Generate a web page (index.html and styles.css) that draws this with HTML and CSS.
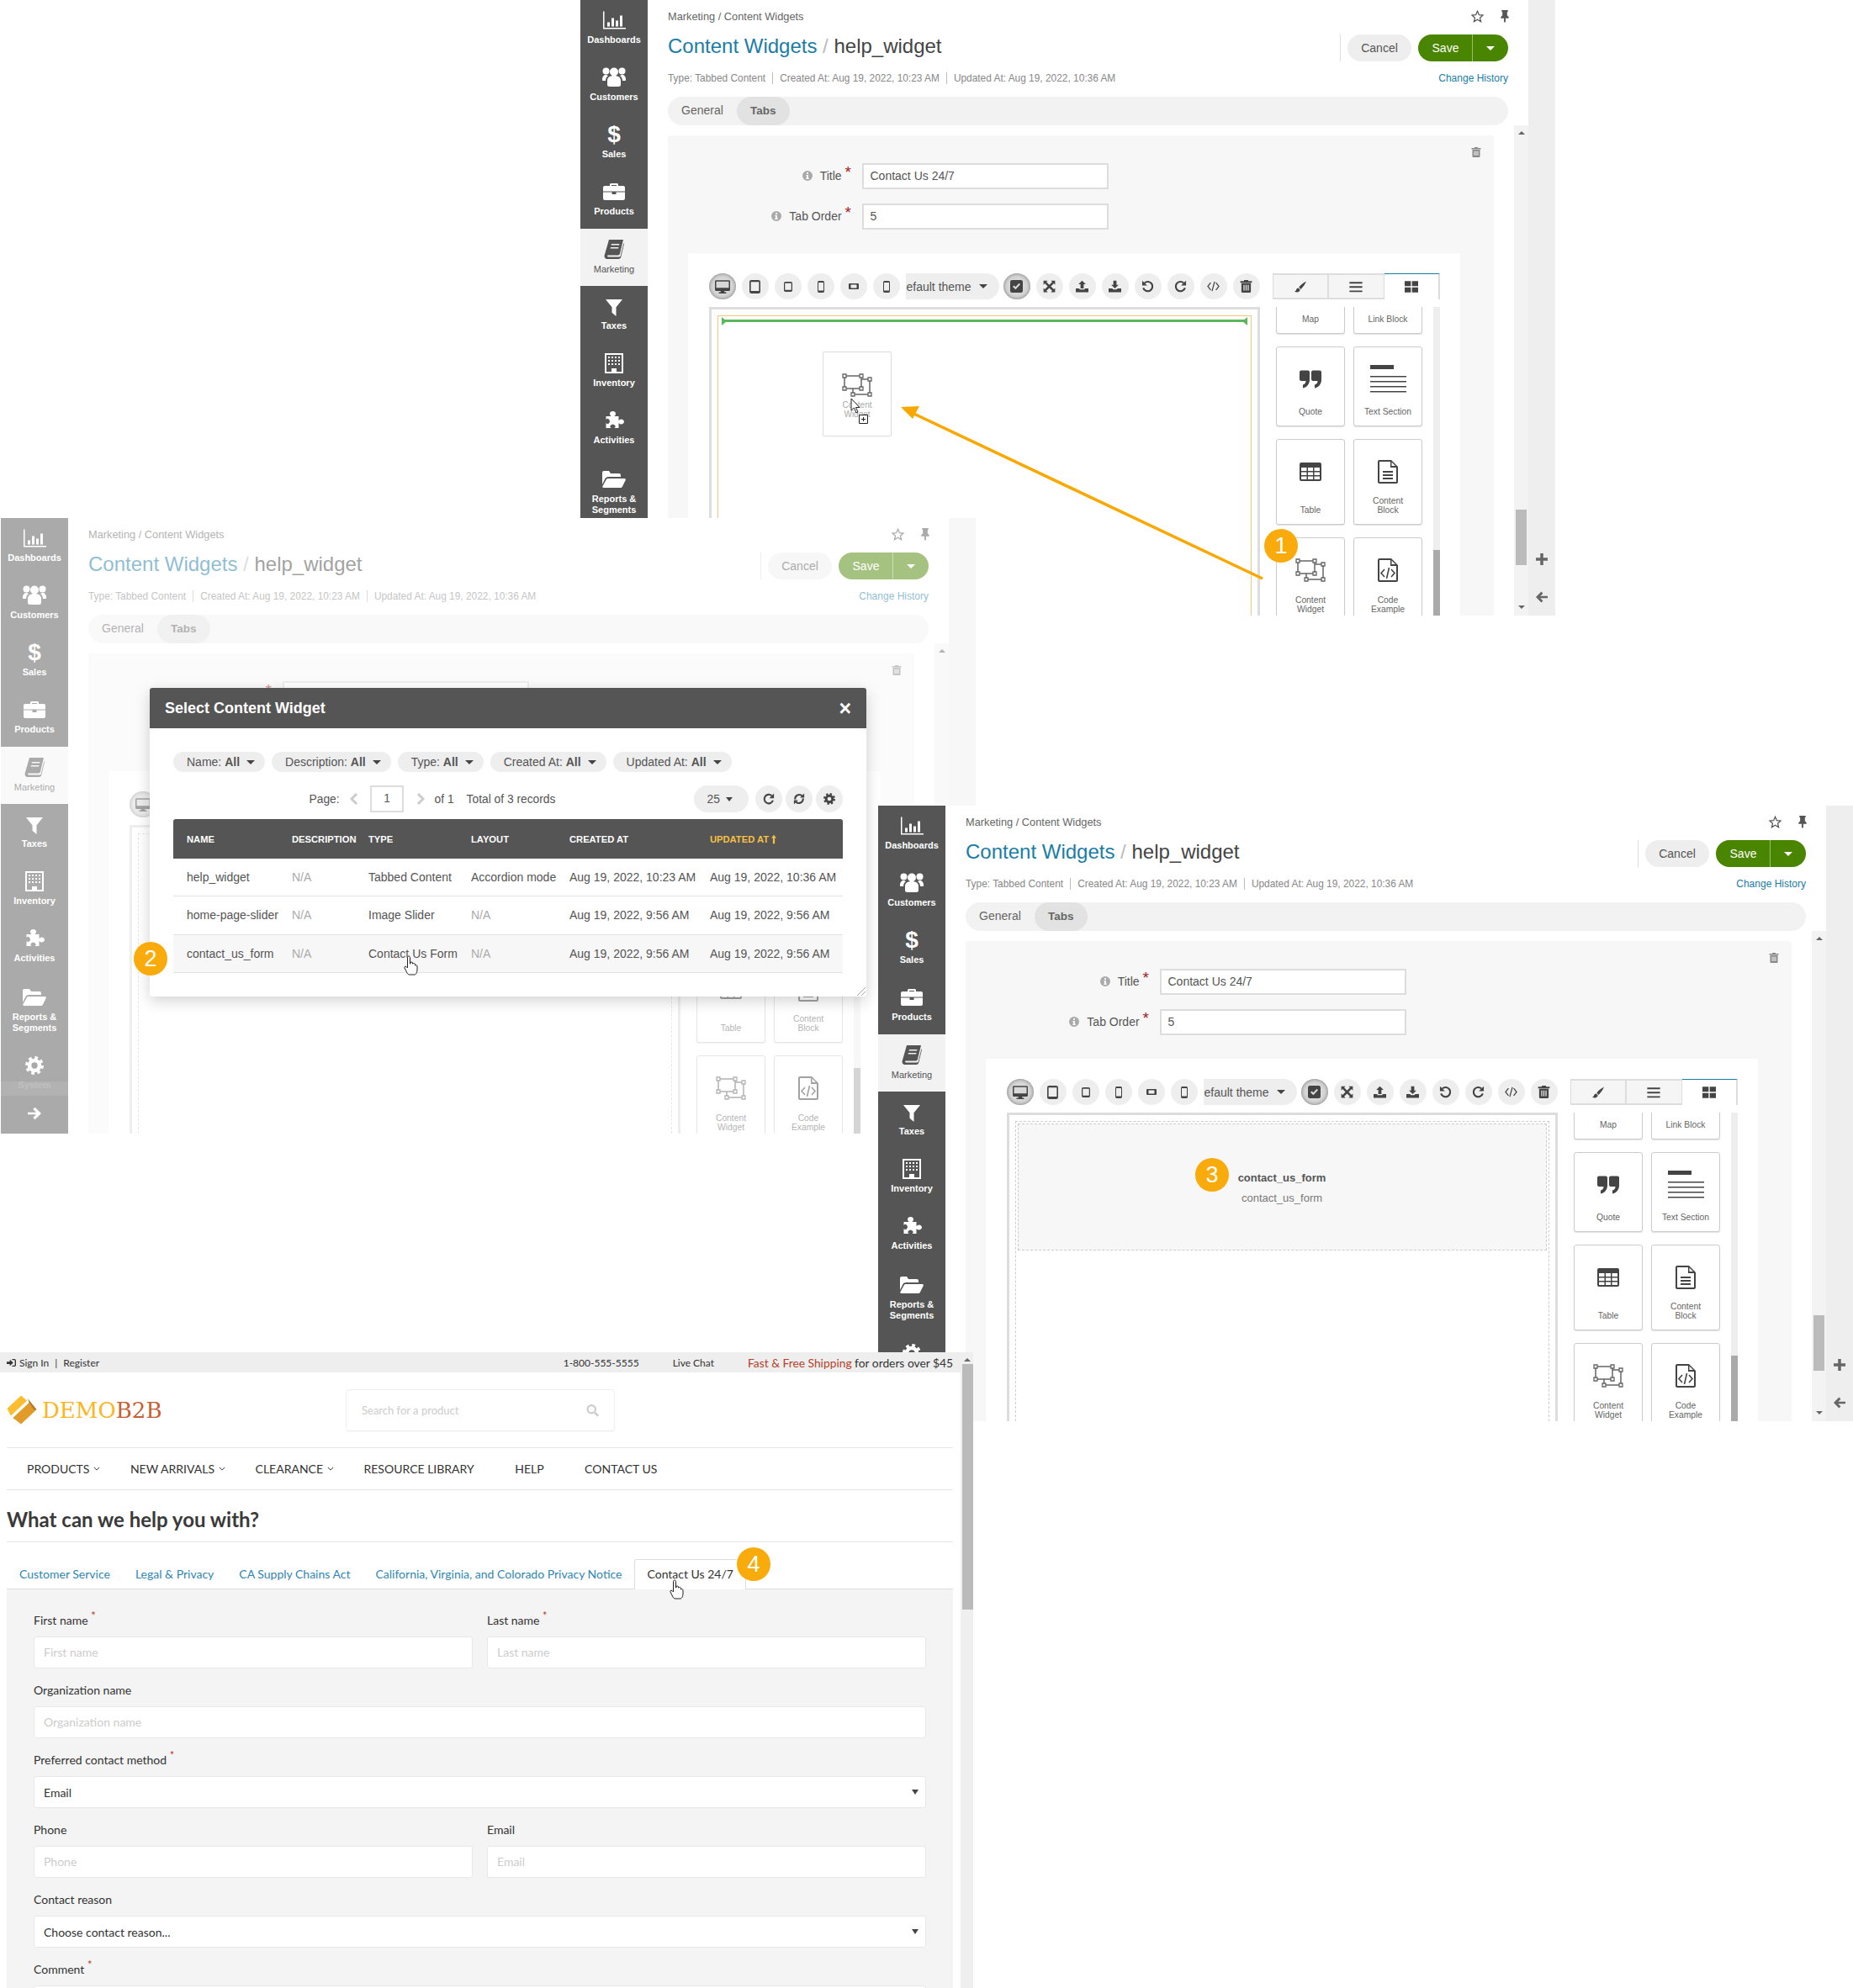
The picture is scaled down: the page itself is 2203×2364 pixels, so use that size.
FILE: index.html
```html
<!DOCTYPE html>
<html lang="en">
<head>
<meta charset="utf-8">
<title>Content widgets walkthrough</title>
<link rel="stylesheet" href="styles.css">
</head>
<body>
<svg class="defs" aria-hidden="true">
<symbol id="i-dash" viewBox="0 0 27 21"><path d="M0 0h1.5v19.5H27V21H0z"/><path d="M5 13h3v5H5zM10 8h3v10h-3zM15 11h3v7h-3zM20 5h3v13h-3z"/></symbol>
<symbol id="i-users" viewBox="0 0 28 24"><circle cx="4.5" cy="4.5" r="4"/><circle cx="23.5" cy="4.5" r="4"/><circle cx="14" cy="5.5" r="5"/><path d="M6 16c0-4 3-6 8-6s8 2 8 6v5c0 1-1 2-3 2H9c-2 0-3-1-3-2zM0 14c0-3 2-5 4-5 1 0 2 .5 3 1-1.5 1-3 3-3 6H1c-.6 0-1-.4-1-1zM28 14c0-3-2-5-4-5-1 0-2 .5-3 1 1.500 1 3 3 3 6h3c.6 0 1-.4 1-1z"/></symbol>
<symbol id="i-brief" viewBox="0 0 26 20"><path fill-rule="evenodd" d="M8 3V1.500C8 .7 8.700 0 9.500 0h7c.8 0 1.500.7 1.500 1.500V3h6c1.100 0 2 .9 2 2v4.500H0V5c0-1.100.9-2 2-2zM10 2v1h6V2z"/><path d="M0 10.500h10.500V13h5v-2.500H26V18c0 1.100-.9 2-2 2H2c-1.100 0-2-.9-2-2z"/></symbol>
<symbol id="i-book" viewBox="0 0 24 24"><path fill-rule="evenodd" d="M6 1h17l-4 16.500c-.3 1.200-1 2-2 2H5c-1 0-1.200 1-.8 1.500.3.3.8.5 1.500.5H18c.8 0 1.400-.3 1.700-1L23.500 5l.5 1-3.700 15.500C20 23 18.800 24 17.300 24H4c-2.200 0-4-2-3.300-4.500zM9 6l-.4 1.500h9.500L18.500 6zM8 10l-.4 1.500h9.500l.4-1.500z"/></symbol>
<symbol id="i-filter" viewBox="0 0 24 24"><path d="M0 0h24L15 11v13l-6-5v-8z"/></symbol>
<symbol id="i-building" viewBox="0 0 22 24"><path fill-rule="evenodd" d="M0 0h22v24H0zM2 2v20h6v-4h6v4h6V2z"/><path d="M4 4h2v2H4zm4 0h2v2H8zm4 0h2v2h-2zm4 0h2v2h-2zM4 8h2v2H4zm4 0h2v2H8zm4 0h2v2h-2zm4 0h2v2h-2zM4 12h2v2H4zm4 0h2v2H8zm4 0h2v2h-2zm4 0h2v2h-2z"/></symbol>
<symbol id="i-puzzle" viewBox="0 0 24 24"><path d="M2 7h6C7 6 6.500 5 6.500 4 6.500 2 8 1 10 1s3.500 1 3.500 3c0 1-.5 2-1.500 3h5v5c1-1 2-1.500 3-1.500 2 0 3.500 1.500 3.500 3s-1.500 3-3.500 3c-1 0-2-.5-3-1.500v6h-5c1-1 1.500-1.500 1-2.500s-2-2-3-2-2.500 1-3 2 0 1.500 1 2.500H2v-6c1 1 1.500 1.500 2.500 1s2-2 2-3-1-2.500-2-3-1.500 0-2.500 1z"/></symbol>
<symbol id="i-folder" viewBox="0 0 28 22"><path d="M0 3c0-1.100.9-2 2-2h6l2 3h10c1.100 0 2 .9 2 2v2H7C5.500 8 4 9 3.400 10.200L0 17z"/><path d="M7 10h19.500c1 0 1.700 1 1.200 2l-4 8c-.4.7-1 1-1.700 1H1.500c-1 0-1.600-1-1.100-1.800l4.400-8C5.200 10.400 6 10 7 10z"/></symbol>
<symbol id="i-gear" viewBox="0 0 24 24"><circle cx="12" cy="12" r="6.500" fill="none" stroke="currentColor" stroke-width="5"/><circle cx="12" cy="12" r="10" fill="none" stroke="currentColor" stroke-width="4" stroke-dasharray="4 3.850"/></symbol>
<symbol id="i-desktop" viewBox="0 0 24 21"><path fill-rule="evenodd" d="M2 0h20c1.100 0 2 .9 2 2v13c0 1.100-.9 2-2 2h-7v2h3v2H6v-2h3v-2H2c-1.100 0-2-.9-2-2V2C0 .9.900 0 2 0zm0 2v10h20V2z"/></symbol>
<symbol id="i-tablet" viewBox="0 0 16 22" preserveAspectRatio="none"><path fill-rule="evenodd" d="M3 0h10a3 3 0 013 3v16a3 3 0 01-3 3H3a3 3 0 01-3-3V3a3 3 0 013-3zM2 3v15h12V3z"/></symbol>
<symbol id="i-land" viewBox="0 0 24 14"><path fill-rule="evenodd" d="M2 0h20a2 2 0 012 2v10a2 2 0 01-2 2H2a2 2 0 01-2-2V2a2 2 0 012-2zm3 3v8h14V3z"/></symbol>
<symbol id="i-check" viewBox="0 0 20 20"><path fill-rule="evenodd" d="M3 0h14a3 3 0 013 3v14a3 3 0 01-3 3H3a3 3 0 01-3-3V3a3 3 0 013-3zM8.500 15L16 7l-2-2-5.500 6L6 8.500l-2 2z"/></symbol>
<symbol id="i-expand" viewBox="0 0 24 24"><path d="M1 1h8L6.500 3.500 12 9l5.500-5.500L15 1h8v8l-2.500-2.500L15 12l5.500 5.500L23 15v8h-8l2.500-2.500L12 15l-5.500 5.500L9 23H1v-8l2.500 2.500L9 12 3.500 6.500 1 9z"/></symbol>
<symbol id="i-upload" viewBox="0 0 24 22"><path d="M12 0l7 7h-4v8H9V7H5zM0 15h7v2h10v-2h7v7H0z"/></symbol>
<symbol id="i-download" viewBox="0 0 24 22"><path d="M9 0h6v8h4l-7 7-7-7h4zM0 15h7l2 2h6l2-2h7v7H0z"/></symbol>
<symbol id="i-undo" viewBox="0 0 24 24"><path d="M6 5.500A9 9 0 1 1 3.500 15" fill="none" stroke="currentColor" stroke-width="3.500"/><path d="M1.500 1v9.500H11z"/></symbol>
<symbol id="i-redo" viewBox="0 0 24 24"><path d="M18 5.500A9 9 0 1 0 20.500 15" fill="none" stroke="currentColor" stroke-width="3.500"/><path d="M22.500 1v9.500H13z"/></symbol>
<symbol id="i-sync" viewBox="0 0 24 24"><path d="M4 13a8.500 8.500 0 0 1 14.500-7M20 11a8.500 8.500 0 0 1-14.500 7" fill="none" stroke="currentColor" stroke-width="3.500"/><path d="M22.500 1v8.500H14zM1.500 23v-8.500H10z"/></symbol>
<symbol id="i-code" viewBox="0 0 24 24"><path d="M7 5L1.500 12 7 19M17 5l5.500 7L17 19M14.500 3l-5 18" fill="none" stroke="currentColor" stroke-width="2"/></symbol>
<symbol id="i-trash" viewBox="0 0 22 24"><path fill-rule="evenodd" d="M7 2V0h8v2h7v3H0V2zM2 6h18v16c0 1-1 2-2 2H4c-1 0-2-1-2-2zm4 3v11h2V9zm4 0v11h2V9zm4 0v11h2V9z"/></symbol>
<symbol id="i-brush" viewBox="0 0 24 24"><path d="M24 1C20 3 13 8 9 13l4 4C18 12 22 6 24 1zM8 14.500c-3 0-4 2-4.500 4-.3 1.500-1.500 2.500-3.500 3 3 2 7 2 9.500 0 1.500-1.200 2-3 1.500-4.500z"/></symbol>
<symbol id="i-bars" viewBox="0 0 24 22"><path d="M0 2h24v3H0zM0 10h24v3H0zM0 18h24v3H0z"/></symbol>
<symbol id="i-grid" viewBox="0 0 24 20"><path d="M0 0h11v9H0zM13 0h11v9H13zM0 11h11v9H0zM13 11h11v9H13z"/></symbol>
<symbol id="i-quote" viewBox="0 0 26 22"><path d="M2 0h8a2 2 0 012 2v9c0 5-3 9-8 10v-4c2-.5 3.500-2 3.500-4.500H2a2 2 0 01-2-2V2a2 2 0 012-2zM16 0h8a2 2 0 012 2v9c0 5-3 9-8 10v-4c2-.5 3.500-2 3.500-4.500H16a2 2 0 01-2-2V2a2 2 0 012-2z"/></symbol>
<symbol id="i-text" viewBox="0 0 43 33"><path d="M0 0h28v5H0zM0 13h43v1.500H0zM0 19h43v1.500H0zM0 25h43v1.500H0zM0 31h43v1.500H0z"/></symbol>
<symbol id="i-table" viewBox="0 0 26 22"><path fill-rule="evenodd" d="M2 0h22a2 2 0 012 2v18a2 2 0 01-2 2H2a2 2 0 01-2-2V2a2 2 0 012-2zM2 6v4h6.500V6zm8 0v4h6V6zm7.500 0v4H24V6zM2 11.500V15h6.500v-3.500zm8 0V15h6v-3.500zm7.500 0V15H24v-3.500zM2 16.500V20h6.500v-3.500zm8 0V20h6v-3.500zm7.500 0V20H24v-3.500z"/></symbol>
<symbol id="i-file" viewBox="0 0 24 28"><path fill-rule="evenodd" d="M2 0h14l8 8v18a2 2 0 01-2 2H2a2 2 0 01-2-2V2a2 2 0 012-2zM2 2v24h20V9h-7V2zM16.500 2.500V7H21z"/><path d="M6 13h12v2H6zM6 17h12v2H6zM6 21h12v2H6z"/></symbol>
<symbol id="i-codefile" viewBox="0 0 24 28"><path fill-rule="evenodd" d="M2 0h14l8 8v18a2 2 0 01-2 2H2a2 2 0 01-2-2V2a2 2 0 012-2zM2 2v24h20V9h-7V2zM16.500 2.500V7H21z"/><path d="M8 13l-4 4.500L8 22M16 13l4 4.500-4 4.500M13.500 11l-3 13" fill="none" stroke="currentColor" stroke-width="1.600"/></symbol>
<symbol id="i-widget" viewBox="0 0 36 28"><path d="M3 3h20v15H3zM23 7h10v18H13v-7" fill="none" stroke="currentColor" stroke-width="1.500"/><path d="M1 1h4v4H1zM21 1h4v4h-4zM1 16h4v4H1zM21 16h4v4h-4zM31 5h4v4h-4zM31 23h4v4h-4zM11 23h4v4h-4z" fill="#fff" stroke="currentColor" stroke-width="1.300"/></symbol>
<symbol id="i-star" viewBox="0 0 24 24"><path d="M12 2l3 7 7.500.7-5.700 5 1.700 7.300-6.500-3.900L5.500 22l1.700-7.300-5.700-5L9 9z" fill="none" stroke="currentColor" stroke-width="2"/></symbol>
<symbol id="i-pin" viewBox="0 0 18 24"><path d="M3 0h12v2.500L13.500 4v6l3 3v2.500H10.500V22L9 24l-1.500-2v-6.500h-6V13l3-3V4L3 2.500z"/></symbol>
<symbol id="i-info" viewBox="0 0 24 24"><path fill-rule="evenodd" d="M12 0a12 12 0 110 24 12 12 0 010-24zM10 4v4h4V4zM8.500 10v2.500H10V17H8.500v3h7v-3H14v-7z"/></symbol>
<symbol id="i-plus" viewBox="0 0 24 24"><path d="M9 0h6v9h9v6h-9v9H9v-9H0V9h9z"/></symbol>
<symbol id="i-left" viewBox="0 0 24 24"><path d="M0 12L11 1l3.500 3.500L9 10h15v4H9l5.500 5.500L11 23z"/></symbol>
<symbol id="i-right" viewBox="0 0 24 24"><path d="M24 12L13 1 9.500 4.500 15 10H0v4h15l-5.500 5.500L13 23z"/></symbol>
<symbol id="i-search" viewBox="0 0 24 24"><circle cx="10" cy="10" r="7.500" fill="none" stroke="currentColor" stroke-width="3.500"/><path d="M15 18l3-3 6 6-3 3z"/></symbol>
<symbol id="i-signin" viewBox="0 0 24 24"><path d="M0 9h8V4l9 8-9 8v-5H0zM14 2h6c2 0 4 2 4 4v12c0 2-2 4-4 4h-6v-3h6c.6 0 1-.4 1-1V6c0-.6-.4-1-1-1h-6z"/></symbol>
<symbol id="i-hand" viewBox="0 0 18 24"><path d="M6 1c1 0 1.500.7 1.500 1.500V10h.5V8.500c1-1 2.500-.5 2.500.5v1h.5c1-1 2.500-.5 2.500.7V12c1-.8 2.500-.3 2.500 1v4c0 3-1.500 6-3 6H7c-1.500 0-2.500-1-3-2L1 15c-.5-1 .5-2.500 2-1.500L4.500 15V2.500C4.500 1.700 5 1 6 1z" fill="#fff" stroke="#222"/></symbol>
<symbol id="i-arrowcur" viewBox="0 0 12 19"><path d="M1 1v14l3.500-3 2.500 6 2-1-2.500-5.500H11z" fill="#fff" stroke="#222"/></symbol>
<symbol id="i-dragadd" viewBox="0 0 11 11"><path d="M.5.500h10v10H.5z" fill="#fff" stroke="#222"/><path d="M5 3h1v2h2v1H6v2H5V6H3V5h2z" fill="#222"/></symbol>
<symbol id="i-sortup" viewBox="0 0 8 14"><path d="M4 0l4 5H5.500v9h-3V5H0z"/></symbol>
</svg>

<main class="canvas">

<!-- Step 1 -->
<section class="screen screen-a">
  <nav class="rail">
    <a class="rail-item"><svg class="ri ri-dash"><use href="#i-dash"/></svg><span>Dashboards</span></a>
    <a class="rail-item"><svg class="ri ri-users"><use href="#i-users"/></svg><span>Customers</span></a>
    <a class="rail-item"><b class="ri-dollar">$</b><span>Sales</span></a>
    <a class="rail-item"><svg class="ri ri-brief"><use href="#i-brief"/></svg><span>Products</span></a>
    <a class="rail-item is-active"><svg class="ri ri-book"><use href="#i-book"/></svg><span>Marketing</span></a>
    <a class="rail-item"><svg class="ri ri-filter"><use href="#i-filter"/></svg><span>Taxes</span></a>
    <a class="rail-item"><svg class="ri ri-build"><use href="#i-building"/></svg><span>Inventory</span></a>
    <a class="rail-item"><svg class="ri ri-puzzle"><use href="#i-puzzle"/></svg><span>Activities</span></a>
    <a class="rail-item rail-tall"><svg class="ri ri-folder"><use href="#i-folder"/></svg><span>Reports &amp;<br>Segments</span></a>
  </nav>
  <div class="main">
    <div class="crumb-row"><span class="crumb">Marketing / Content Widgets</span><span class="crumb-tools"><svg class="t-star"><use href="#i-star"/></svg><svg class="t-pin"><use href="#i-pin"/></svg></span></div>
    <div class="title-row">
      <h1 class="title"><a>Content Widgets</a> <i>/</i> help_widget</h1>
      <div class="actions"><span class="btn-cancel">Cancel</span><span class="btn-save"><b>Save</b><em><u class="caret caret-w"></u></em></span></div>
    </div>
    <div class="meta-row"><span class="meta"><span>Type: Tabbed Content</span><span>Created At: Aug 19, 2022, 10:23 AM</span><span>Updated At: Aug 19, 2022, 10:36 AM</span></span><a class="history">Change History</a></div>
    <div class="tabs-bar"><span class="tab">General</span><span class="tab is-on">Tabs</span></div>
    <div class="panel">
      <svg class="panel-trash"><use href="#i-trash"/></svg>
      <div class="field"><label class="field-label"><svg class="info"><use href="#i-info"/></svg>Title<sup>*</sup></label><div class="field-input">Contact Us 24/7</div></div>
      <div class="field"><label class="field-label"><svg class="info"><use href="#i-info"/></svg>Tab Order<sup>*</sup></label><div class="field-input">5</div></div>
      <div class="editor">
        <div class="edit-col">
          <div class="toolbar">
            <span class="tb is-on"><svg class="tb-desk"><use href="#i-desktop"/></svg></span>
            <span class="tb"><svg class="tb-t1"><use href="#i-tablet"/></svg></span>
            <span class="tb"><svg class="tb-t2"><use href="#i-tablet"/></svg></span>
            <span class="tb"><svg class="tb-m1"><use href="#i-tablet"/></svg></span>
            <span class="tb"><svg class="tb-l"><use href="#i-land"/></svg></span>
            <span class="tb"><svg class="tb-m1"><use href="#i-tablet"/></svg></span>
            <span class="theme"><span class="theme-text">efault theme</span><u class="caret"></u></span>
            <span class="tb is-on"><svg class="tb-std"><use href="#i-check"/></svg></span>
            <span class="tb"><svg class="tb-std"><use href="#i-expand"/></svg></span>
            <span class="tb"><svg class="tb-std"><use href="#i-upload"/></svg></span>
            <span class="tb"><svg class="tb-std"><use href="#i-download"/></svg></span>
            <span class="tb"><svg class="tb-std"><use href="#i-undo"/></svg></span>
            <span class="tb"><svg class="tb-std"><use href="#i-redo"/></svg></span>
            <span class="tb"><svg class="tb-std"><use href="#i-code"/></svg></span>
            <span class="tb"><svg class="tb-std"><use href="#i-trash"/></svg></span>
          </div>
          <div class="frame"><div class="drop drop-live"><div class="guide"></div></div></div>
        </div>
        <div class="lib">
          <div class="lib-tabs"><span class="lib-tab"><svg><use href="#i-brush"/></svg></span><span class="lib-tab"><svg><use href="#i-bars"/></svg></span><span class="lib-tab is-on"><svg><use href="#i-grid"/></svg></span></div>
          <div class="lib-body">
            <div class="cards">
              <div class="card"><span class="card-label">Map</span></div>
              <div class="card"><span class="card-label">Link Block</span></div>
              <div class="card"><span class="card-ico"><svg class="c-quote"><use href="#i-quote"/></svg></span><span class="card-label">Quote</span></div>
              <div class="card"><span class="card-ico"><svg class="c-text"><use href="#i-text"/></svg></span><span class="card-label">Text Section</span></div>
              <div class="card"><span class="card-ico"><svg class="c-table"><use href="#i-table"/></svg></span><span class="card-label">Table</span></div>
              <div class="card"><span class="card-ico"><svg class="c-file"><use href="#i-file"/></svg></span><span class="card-label">Content<br>Block</span></div>
              <div class="card"><span class="card-ico"><svg class="c-widget"><use href="#i-widget"/></svg></span><span class="card-label">Content<br>Widget</span></div>
              <div class="card"><span class="card-ico"><svg class="c-file"><use href="#i-codefile"/></svg></span><span class="card-label">Code<br>Example</span></div>
            </div>
            <div class="lib-scroll"><div class="lib-thumb"></div></div>
          </div>
        </div>
      </div>
    </div>
  </div>
  <div class="track"><u class="arr-up"></u><div class="track-thumb"></div><u class="arr-down"></u></div>
  <div class="side"><svg class="side-ico"><use href="#i-plus"/></svg><svg class="side-ico"><use href="#i-left"/></svg></div>
  <div class="ghost"><svg class="c-widget"><use href="#i-widget"/></svg><span>Content<br>Widget</span></div>
  <svg class="cur-arrow"><use href="#i-arrowcur"/></svg>
  <svg class="cur-plus"><use href="#i-dragadd"/></svg>
  <svg class="callout" viewBox="0 0 1159 732"><path d="M811 688L386 487" fill="none" stroke="#f9a800" stroke-width="3.500"/><path d="M381 484l22-1-8 15z" fill="#f9a800"/></svg>
  <span class="badge badge-1">1</span>
</section>

<!-- Step 2 -->
<section class="screen screen-b">
  <nav class="rail">
    <a class="rail-item"><svg class="ri ri-dash"><use href="#i-dash"/></svg><span>Dashboards</span></a>
    <a class="rail-item"><svg class="ri ri-users"><use href="#i-users"/></svg><span>Customers</span></a>
    <a class="rail-item"><b class="ri-dollar">$</b><span>Sales</span></a>
    <a class="rail-item"><svg class="ri ri-brief"><use href="#i-brief"/></svg><span>Products</span></a>
    <a class="rail-item is-active"><svg class="ri ri-book"><use href="#i-book"/></svg><span>Marketing</span></a>
    <a class="rail-item"><svg class="ri ri-filter"><use href="#i-filter"/></svg><span>Taxes</span></a>
    <a class="rail-item"><svg class="ri ri-build"><use href="#i-building"/></svg><span>Inventory</span></a>
    <a class="rail-item"><svg class="ri ri-puzzle"><use href="#i-puzzle"/></svg><span>Activities</span></a>
    <a class="rail-item rail-tall"><svg class="ri ri-folder"><use href="#i-folder"/></svg><span>Reports &amp;<br>Segments</span></a>
    <a class="rail-item"><svg class="ri ri-gear"><use href="#i-gear"/></svg><span>System</span></a>
    <a class="rail-next"><svg class="ri-next"><use href="#i-right"/></svg></a>
    <div class="rail-band"></div>
  </nav>
  <div class="main">
    <div class="crumb-row"><span class="crumb">Marketing / Content Widgets</span><span class="crumb-tools"><svg class="t-star"><use href="#i-star"/></svg><svg class="t-pin"><use href="#i-pin"/></svg></span></div>
    <div class="title-row">
      <h1 class="title"><a>Content Widgets</a> <i>/</i> help_widget</h1>
      <div class="actions"><span class="btn-cancel">Cancel</span><span class="btn-save"><b>Save</b><em><u class="caret caret-w"></u></em></span></div>
    </div>
    <div class="meta-row"><span class="meta"><span>Type: Tabbed Content</span><span>Created At: Aug 19, 2022, 10:23 AM</span><span>Updated At: Aug 19, 2022, 10:36 AM</span></span><a class="history">Change History</a></div>
    <div class="tabs-bar"><span class="tab">General</span><span class="tab is-on">Tabs</span></div>
    <div class="panel">
      <svg class="panel-trash"><use href="#i-trash"/></svg>
      <div class="field"><label class="field-label"><svg class="info"><use href="#i-info"/></svg>Title<sup>*</sup></label><div class="field-input">Contact Us 24/7</div></div>
      <div class="field"><label class="field-label"><svg class="info"><use href="#i-info"/></svg>Tab Order<sup>*</sup></label><div class="field-input">5</div></div>
      <div class="editor">
        <div class="edit-col">
          <div class="toolbar">
            <span class="tb is-on"><svg class="tb-desk"><use href="#i-desktop"/></svg></span>
          </div>
          <div class="frame"><div class="drop"></div></div>
        </div>
        <div class="lib">
          <div class="lib-tabs"></div>
          <div class="lib-body">
            <div class="cards">
              <div class="card"></div>
              <div class="card"></div>
              <div class="card"></div>
              <div class="card"></div>
              <div class="card"><span class="card-ico"><svg class="c-table"><use href="#i-table"/></svg></span><span class="card-label">Table</span></div>
              <div class="card"><span class="card-ico"><svg class="c-file"><use href="#i-file"/></svg></span><span class="card-label">Content<br>Block</span></div>
              <div class="card"><span class="card-ico"><svg class="c-widget"><use href="#i-widget"/></svg></span><span class="card-label">Content<br>Widget</span></div>
              <div class="card"><span class="card-ico"><svg class="c-file"><use href="#i-codefile"/></svg></span><span class="card-label">Code<br>Example</span></div>
            </div>
            <div class="lib-scroll"><div class="lib-thumb"></div></div>
          </div>
        </div>
      </div>
    </div>
  </div>
  <div class="track"><u class="arr-up"></u><div class="track-thumb"></div><u class="arr-down"></u></div>
  <div class="side"><svg class="side-ico"><use href="#i-plus"/></svg><svg class="side-ico"><use href="#i-left"/></svg></div>
  <div class="scrim"></div>
  <div class="modal">
    <header class="modal-head"><strong>Select Content Widget</strong><span class="modal-x">×</span></header>
    <div class="modal-body">
      <div class="filters">
        <span class="pill">Name: <b>All</b><u class="caret"></u></span>
        <span class="pill">Description: <b>All</b><u class="caret"></u></span>
        <span class="pill">Type: <b>All</b><u class="caret"></u></span>
        <span class="pill">Created At: <b>All</b><u class="caret"></u></span>
        <span class="pill">Updated At: <b>All</b><u class="caret"></u></span>
      </div>
      <div class="pager">
        <span>Page:</span><svg class="chev chev-prev" viewBox="0 0 10 16"><path d="M8 2L2 8l6 6"/></svg><span class="page-box">1</span><svg class="chev chev-next" viewBox="0 0 10 16"><path d="M2 2l6 6-6 6"/></svg><span>of 1</span><span class="page-total">Total of 3 records</span>
        <span class="pager-tools"><span class="page-size">25<u class="caret"></u></span><span class="round"><svg><use href="#i-redo"/></svg></span><span class="round"><svg><use href="#i-sync"/></svg></span><span class="round"><svg><use href="#i-gear"/></svg></span></span>
      </div>
      <div class="grid-table">
        <div class="gt-row gt-head"><span>Name</span><span>Description</span><span>Type</span><span>Layout</span><span>Created At</span><span class="gt-sorted">Updated At<svg class="sort-up"><use href="#i-sortup"/></svg></span></div>
        <div class="gt-row"><span>help_widget</span><span class="na">N/A</span><span>Tabbed Content</span><span>Accordion mode</span><span>Aug 19, 2022, 10:23 AM</span><span>Aug 19, 2022, 10:36 AM</span></div>
        <div class="gt-row"><span>home-page-slider</span><span class="na">N/A</span><span>Image Slider</span><span class="na">N/A</span><span>Aug 19, 2022, 9:56 AM</span><span>Aug 19, 2022, 9:56 AM</span></div>
        <div class="gt-row gt-hover"><span>contact_us_form</span><span class="na">N/A</span><span>Contact Us Form</span><span class="na">N/A</span><span>Aug 19, 2022, 9:56 AM</span><span>Aug 19, 2022, 9:56 AM</span></div>
      </div>
    </div>
    <svg class="grip" viewBox="0 0 10 10"><path d="M0 10L10 0M5 10l5-5" stroke="#aaa" fill="none"/></svg>
  </div>
  <span class="badge badge-2">2</span>
  <svg class="cur-hand cur-hand-b"><use href="#i-hand"/></svg>
</section>

<!-- Step 3 -->
<section class="screen screen-c">
  <nav class="rail">
    <a class="rail-item"><svg class="ri ri-dash"><use href="#i-dash"/></svg><span>Dashboards</span></a>
    <a class="rail-item"><svg class="ri ri-users"><use href="#i-users"/></svg><span>Customers</span></a>
    <a class="rail-item"><b class="ri-dollar">$</b><span>Sales</span></a>
    <a class="rail-item"><svg class="ri ri-brief"><use href="#i-brief"/></svg><span>Products</span></a>
    <a class="rail-item is-active"><svg class="ri ri-book"><use href="#i-book"/></svg><span>Marketing</span></a>
    <a class="rail-item"><svg class="ri ri-filter"><use href="#i-filter"/></svg><span>Taxes</span></a>
    <a class="rail-item"><svg class="ri ri-build"><use href="#i-building"/></svg><span>Inventory</span></a>
    <a class="rail-item"><svg class="ri ri-puzzle"><use href="#i-puzzle"/></svg><span>Activities</span></a>
    <a class="rail-item rail-tall"><svg class="ri ri-folder"><use href="#i-folder"/></svg><span>Reports &amp;<br>Segments</span></a>
    <a class="rail-item"><svg class="ri ri-gear"><use href="#i-gear"/></svg></a>
  </nav>
  <div class="main">
    <div class="crumb-row"><span class="crumb">Marketing / Content Widgets</span><span class="crumb-tools"><svg class="t-star"><use href="#i-star"/></svg><svg class="t-pin"><use href="#i-pin"/></svg></span></div>
    <div class="title-row">
      <h1 class="title"><a>Content Widgets</a> <i>/</i> help_widget</h1>
      <div class="actions"><span class="btn-cancel">Cancel</span><span class="btn-save"><b>Save</b><em><u class="caret caret-w"></u></em></span></div>
    </div>
    <div class="meta-row"><span class="meta"><span>Type: Tabbed Content</span><span>Created At: Aug 19, 2022, 10:23 AM</span><span>Updated At: Aug 19, 2022, 10:36 AM</span></span><a class="history">Change History</a></div>
    <div class="tabs-bar"><span class="tab">General</span><span class="tab is-on">Tabs</span></div>
    <div class="panel">
      <svg class="panel-trash"><use href="#i-trash"/></svg>
      <div class="field"><label class="field-label"><svg class="info"><use href="#i-info"/></svg>Title<sup>*</sup></label><div class="field-input">Contact Us 24/7</div></div>
      <div class="field"><label class="field-label"><svg class="info"><use href="#i-info"/></svg>Tab Order<sup>*</sup></label><div class="field-input">5</div></div>
      <div class="editor">
        <div class="edit-col">
          <div class="toolbar">
            <span class="tb is-on"><svg class="tb-desk"><use href="#i-desktop"/></svg></span>
            <span class="tb"><svg class="tb-t1"><use href="#i-tablet"/></svg></span>
            <span class="tb"><svg class="tb-t2"><use href="#i-tablet"/></svg></span>
            <span class="tb"><svg class="tb-m1"><use href="#i-tablet"/></svg></span>
            <span class="tb"><svg class="tb-l"><use href="#i-land"/></svg></span>
            <span class="tb"><svg class="tb-m1"><use href="#i-tablet"/></svg></span>
            <span class="theme"><span class="theme-text">efault theme</span><u class="caret"></u></span>
            <span class="tb is-on"><svg class="tb-std"><use href="#i-check"/></svg></span>
            <span class="tb"><svg class="tb-std"><use href="#i-expand"/></svg></span>
            <span class="tb"><svg class="tb-std"><use href="#i-upload"/></svg></span>
            <span class="tb"><svg class="tb-std"><use href="#i-download"/></svg></span>
            <span class="tb"><svg class="tb-std"><use href="#i-undo"/></svg></span>
            <span class="tb"><svg class="tb-std"><use href="#i-redo"/></svg></span>
            <span class="tb"><svg class="tb-std"><use href="#i-code"/></svg></span>
            <span class="tb"><svg class="tb-std"><use href="#i-trash"/></svg></span>
          </div>
          <div class="frame"><div class="drop"><div class="block"><strong>contact_us_form</strong><span>contact_us_form</span></div></div></div>
        </div>
        <div class="lib">
          <div class="lib-tabs"><span class="lib-tab"><svg><use href="#i-brush"/></svg></span><span class="lib-tab"><svg><use href="#i-bars"/></svg></span><span class="lib-tab is-on"><svg><use href="#i-grid"/></svg></span></div>
          <div class="lib-body">
            <div class="cards">
              <div class="card"><span class="card-label">Map</span></div>
              <div class="card"><span class="card-label">Link Block</span></div>
              <div class="card"><span class="card-ico"><svg class="c-quote"><use href="#i-quote"/></svg></span><span class="card-label">Quote</span></div>
              <div class="card"><span class="card-ico"><svg class="c-text"><use href="#i-text"/></svg></span><span class="card-label">Text Section</span></div>
              <div class="card"><span class="card-ico"><svg class="c-table"><use href="#i-table"/></svg></span><span class="card-label">Table</span></div>
              <div class="card"><span class="card-ico"><svg class="c-file"><use href="#i-file"/></svg></span><span class="card-label">Content<br>Block</span></div>
              <div class="card"><span class="card-ico"><svg class="c-widget"><use href="#i-widget"/></svg></span><span class="card-label">Content<br>Widget</span></div>
              <div class="card"><span class="card-ico"><svg class="c-file"><use href="#i-codefile"/></svg></span><span class="card-label">Code<br>Example</span></div>
            </div>
            <div class="lib-scroll"><div class="lib-thumb"></div></div>
          </div>
        </div>
      </div>
    </div>
  </div>
  <div class="track"><u class="arr-up"></u><div class="track-thumb"></div><u class="arr-down"></u></div>
  <div class="side"><svg class="side-ico"><use href="#i-plus"/></svg><svg class="side-ico"><use href="#i-left"/></svg></div>
  <span class="badge badge-3">3</span>
</section>

<!-- Step 4 -->
<section class="shop">
  <div class="shop-page">
    <div class="topbar">
      <span class="top-left"><svg class="signin"><use href="#i-signin"/></svg>Sign In<i>|</i>Register</span>
      <span class="top-right"><span>1-800-555-5555</span><span>Live Chat</span><span class="promo"><em>Fast &amp; Free Shipping</em> for orders over $45</span></span>
    </div>
    <div class="shop-wrap">
      <div class="brand-row">
        <a class="logo">
          <svg class="logo-mark" viewBox="0 0 36 35"><path d="M1 16L17 1l6.500 5.500L5 24z" fill="#fcbe2e" stroke="#fcbe2e" stroke-linejoin="round"/><path d="M8 27L27 9l8 8-18 17z" fill="#e29a28" stroke="#e29a28" stroke-linejoin="round"/><path d="M25 4l10.500 13-3 .5L26.500 8.500z" fill="#a97c2c"/></svg>
          <span class="logo-a">DEMO</span><span class="logo-b">B2B</span>
        </a>
        <div class="search"><span>Search for a product</span><svg><use href="#i-search"/></svg></div>
      </div>
      <ul class="shop-nav">
        <li>PRODUCTS<svg class="vee" viewBox="0 0 10 6"><path d="M1 1l4 4 4-4"/></svg></li>
        <li>NEW ARRIVALS<svg class="vee" viewBox="0 0 10 6"><path d="M1 1l4 4 4-4"/></svg></li>
        <li>CLEARANCE<svg class="vee" viewBox="0 0 10 6"><path d="M1 1l4 4 4-4"/></svg></li>
        <li>RESOURCE LIBRARY</li>
        <li class="nav-wide">HELP</li>
        <li class="nav-wide">CONTACT US</li>
      </ul>
      <h2 class="shop-title">What can we help you with?</h2>
      <div class="shop-tabs"><a>Customer Service</a><a>Legal &amp; Privacy</a><a>CA Supply Chains Act</a><a>California, Virginia, and Colorado Privacy Notice</a><a class="is-on">Contact Us 24/7</a></div>
      <form class="contact">
        <div class="cf-group"><label>First name <sup>*</sup></label><div class="cf-input">First name</div></div>
        <div class="cf-group"><label>Last name <sup>*</sup></label><div class="cf-input">Last name</div></div>
        <div class="cf-group cf-full"><label>Organization name</label><div class="cf-input">Organization name</div></div>
        <div class="cf-group cf-full"><label>Preferred contact method <sup>*</sup></label><div class="cf-input cf-select">Email<u class="caret"></u></div></div>
        <div class="cf-group"><label>Phone</label><div class="cf-input">Phone</div></div>
        <div class="cf-group"><label>Email</label><div class="cf-input">Email</div></div>
        <div class="cf-group cf-full"><label>Contact reason</label><div class="cf-input cf-select">Choose contact reason...<u class="caret"></u></div></div>
        <div class="cf-group cf-full"><label>Comment <sup>*</sup></label><div class="cf-input cf-area"></div></div>
      </form>
    </div>
  </div>
  <div class="shop-scroll"><u class="arr-up"></u><div class="shop-thumb"></div></div>
  <span class="badge badge-4">4</span>
  <svg class="cur-hand cur-hand-d"><use href="#i-hand"/></svg>
</section>

</main>
</body>
</html>
```

FILE: styles.css
```css
* { box-sizing: border-box; }
html, body { margin: 0; background: #fff; }
.defs { position: absolute; width: 0; height: 0; }
.canvas { position: relative; width: 2203px; height: 2364px; overflow: hidden; font-family: "Liberation Sans", Arial, sans-serif; color: #555; }
svg { display: block; fill: currentColor; }
u { text-decoration: none; }

/* free-canvas screenshots */
.screen { position: absolute; display: flex; width: 1159px; height: 732px; overflow: hidden; background: #fff; }
.screen-a { left: 690px; top: 0; }
.screen-b { left: 1px; top: 616px; }
.screen-c { left: 1044px; top: 958px; }

/* rail */
.rail { position: relative; flex: none; width: 80px; display: flex; flex-direction: column; background: #555; color: #fff; }
.rail-item { flex: none; height: 68px; padding-top: 12px; display: flex; flex-direction: column; align-items: center; font-size: 11px; font-weight: bold; line-height: 13px; text-align: center; }
.rail-item > svg, .ri-dollar { height: 24px; flex: none; }
.rail-item > span { margin-top: 4.5px; }
.rail-item.is-active { background: #f2f2f2; color: #555; }
.rail-item.is-active > span { font-weight: normal; margin-top: 5.500px; }
.rail-tall { height: 83px; padding-top: 14px; }
.ri-dash { width: 27px; }
.ri-users { width: 28px; }
.ri-brief { width: 26px; }
.ri-book { width: 24px; }
.rail-item > .ri-filter { width: 20px; height: 20px; margin-top: 4px; }
.ri-build { width: 22px; }
.ri-puzzle { width: 25px; }
.ri-folder { width: 28px; }
.ri-gear { width: 22px; }
.ri-dollar { font-size: 28px; line-height: 24px; }
.rail-next { flex: none; height: 26px; display: flex; align-items: center; justify-content: center; }
.ri-next { width: 16px; height: 16px; }
.rail-band { position: absolute; left: 0; top: 670px; width: 80px; height: 17px; background: rgba(105,105,105,.85); }

/* header */
.main { flex: none; width: 1030px; height: 100%; padding: 0 7px 0 24px; display: flex; flex-direction: column; min-height: 0; }
.crumb-row { flex: none; height: 38px; display: flex; align-items: center; justify-content: space-between; }
.crumb { font-size: 12.800px; color: #666; }
.crumb-tools { display: flex; align-items: center; gap: 19px; margin-right: -2px; color: #555; }
.t-star { width: 15px; height: 15px; }
.t-pin { width: 12px; height: 15px; }
.title-row { flex: none; height: 32px; display: flex; align-items: center; justify-content: space-between; }
.title { margin: 0; padding-top: 1px; font-size: 24px; font-weight: normal; line-height: 32px; color: #444; }
.title a { color: #1a7da6; }
.title i { font-style: normal; color: #bbb; }
.actions { align-self: flex-start; margin-top: 3px; height: 32px; display: flex; gap: 8px; border-left: 1px solid #ddd; padding-left: 8px; flex: none; }
.btn-cancel { width: 76px; height: 32px; border-radius: 16px; background: #eee; font-size: 14px; line-height: 32px; text-align: center; color: #555; }
.btn-save { width: 107px; height: 32px; border-radius: 16px; background: #4a8500; color: #fff; display: flex; font-size: 14px; line-height: 32px; overflow: hidden; }
.btn-save b { font-weight: normal; width: 65px; text-align: center; padding-left: 1px; border-right: 1px solid rgba(255,255,255,.45); }
.btn-save em { flex: 1; display: flex; align-items: center; justify-content: center; }
.caret { display: inline-block; width: 0; height: 0; border-left: 5px solid transparent; border-right: 5px solid transparent; border-top: 5px solid #444; }
.caret-w { border-top-color: #fff; }
.meta-row { flex: none; height: 20px; margin-top: 13px; display: flex; align-items: center; justify-content: space-between; font-size: 11.900px; color: #888; }
.meta { display: flex; }
.meta > span { padding: 0 8px; border-left: 1px solid #bbb; line-height: 14px; }
.meta > span:first-child { padding-left: 0; border-left: 0; }
.history { color: #1a7da6; font-size: 12px; }
.tabs-bar { flex: none; height: 34px; margin-top: 12px; border-radius: 17px; background: #f2f2f2; display: flex; font-size: 14px; line-height: 33px; }
.tab { padding: 0 16px; border-radius: 17px; color: #666; }
.tab.is-on { margin-left: 0; width: 63.500px; font-size: 13.500px; font-weight: bold; background: #e2e2e2; text-align: center; padding: 0; }
.tab:first-child { width: 81.500px; }

/* panel */
.panel { position: relative; flex: 1; min-height: 0; margin: 12px 17px 0 0; padding-top: 32.500px; background: #f7f7f7; border-radius: 3px 3px 0 0; display: flex; flex-direction: column; }
.panel-trash { position: absolute; right: 15px; top: 14px; width: 12px; height: 12px; color: #888; }
.field { flex: none; display: flex; gap: 12.500px; height: 31px; margin-bottom: 17px; }
.field-label { width: 218px; display: flex; align-items: center; justify-content: flex-end; gap: 0; font-size: 14px; color: #555; }
.field-label sup { color: #a32020; font-size: 19px; line-height: 10px; margin: -9px 0 0 4px; }
.info { width: 12px; height: 12px; margin-right: 9px; color: #aaa; }
.field-input { width: 293px; height: 31px; border: 2px solid #ddd; background: #fff; padding-left: 8px; font-size: 14px; line-height: 27px; color: #555; }
.editor { flex: 1; min-height: 0; margin: 11.500px 40px 0 24px; padding: 24px 24px 0 24.500px; background: #fff; display: flex; }
.edit-col { flex: none; width: 655px; display: flex; flex-direction: column; min-height: 0; }
.toolbar { flex: none; height: 31px; display: flex; gap: 7px; }
.tb { flex: none; width: 32px; height: 31px; border-radius: 50%; background: #eee; display: flex; align-items: center; justify-content: center; color: #444; }
.tb.is-on { background: #d8d8d8; box-shadow: inset 0 0 5px #777; }
.tb-desk { width: 18px; height: 16px; }
.tb-t1 { width: 13px; height: 16px; }
.tb-t2 { width: 10px; height: 12px; }
.tb-m1 { width: 8px; height: 14px; }
.tb-l { width: 12px; height: 7px; }
.tb-std { width: 15px; height: 15px; }
.theme { flex: none; width: 111.500px; margin-right: -2.500px; height: 31px; background: #eee; border-radius: 0 16px 16px 0; display: flex; align-items: center; gap: 9px; padding-left: 1px; font-size: 14px; color: #555; }
.frame { flex: 1; min-height: 0; margin-top: 9px; border: 3px solid #ddd; border-bottom: 0; padding: 7px 7px 0; }
.drop { height: 100%; border: 1px dashed #ccc; border-bottom: 0; padding: 2px 2px 0; }
.drop-live { border: 1px solid #f9c67a; border-bottom: 0; padding: 4px 4px 0; }
.guide { position: relative; height: 3px; background: #5cb85c; }
.guide::before, .guide::after { content: ""; position: absolute; top: -3px; border-top: 5px solid transparent; border-bottom: 5px solid transparent; width: 0; height: 0; }
.guide::before { left: 0; border-left: 6px solid #5cb85c; }
.guide::after { right: 0; border-right: 6px solid #5cb85c; }
.block { height: 150.500px; padding-top: 55px; background: #f7f7f7; border: 1px dashed #ccc; display: flex; flex-direction: column; align-items: center; font-size: 13px; line-height: 18px; gap: 6px; color: #777; }
.block strong { color: #555; }
.lib { flex: none; width: 199.500px; margin-left: 15px; display: flex; flex-direction: column; min-height: 0; }
.lib-tabs { flex: none; height: 31px; display: flex; }
.lib-tab { flex: 1; border: 2px solid #ddd; border-left-width: 1px; border-right-width: 1px; background: #f5f5f5; display: flex; align-items: center; justify-content: center; color: #444; }
.lib-tab svg { width: 16px; height: 14px; }
.lib-tab.is-on { background: #fff; border-top: 1px solid #1a7da6; border-left: 0; border-bottom: 0; border-right: 2px solid #ddd; }
.lib-body { flex: 1; min-height: 0; margin-top: 9px; display: flex; justify-content: space-between; padding-left: 4.500px; overflow: hidden; }
.cards { display: grid; grid-template-columns: 82px 82px; column-gap: 10px; row-gap: 15.300px; grid-template-rows: 91.700px 94.700px 102px 102px; margin-top: -60px; align-self: flex-start; }
.card { position: relative; display: flex; flex-direction: column; align-items: center; padding-bottom: 10.500px; background: #fff; border: 1px solid #ccc; border-radius: 3px; box-shadow: 0 1px 1px rgba(0,0,0,.12); color: #444; }
.card-ico { flex: none; height: 76px; margin-bottom: -76px; display: flex; align-items: center; justify-content: center; }
.card-label { margin-top: auto; font-size: 10.300px; line-height: 11px; text-align: center; color: #666; }
.c-quote { width: 26px; height: 23px; margin-top: 1px; }
.c-text { width: 43px; height: 33px; }
.c-table { width: 26px; height: 22px; }
.c-file { width: 24px; height: 28px; }
.c-widget { width: 36px; height: 28px; color: #666; }
.lib-scroll { flex: none; width: 8px; background: #eee; padding-top: 289px; }
.lib-thumb { height: 100%; background: #aaa; }

/* right rails */
.track { flex: none; width: 17px; margin-top: 149px; background: #f3f3f3; display: flex; flex-direction: column; align-items: center; }
.arr-up, .arr-down { flex: none; width: 0; height: 0; border-left: 4px solid transparent; border-right: 4px solid transparent; }
.arr-up { border-bottom: 4px solid #666; margin-top: 7px; }
.arr-down { border-top: 4px solid #666; margin: auto 0 8px; }
.track-thumb { width: 13px; height: 66px; margin-top: 446px; background: #bbb; }
.side { flex: none; width: 32px; background: #eee; display: flex; flex-direction: column; align-items: center; justify-content: flex-end; gap: 31px; padding-bottom: 15px; color: #666; }
.side-ico { width: 14px; height: 14px; }

/* overlay items */
.ghost { position: absolute; left: 288px; top: 418px; width: 82px; height: 101px; background: #fff; border: 1px solid #ddd; border-radius: 2px; display: flex; flex-direction: column; align-items: center; padding-top: 25px; font-size: 10px; line-height: 11px; text-align: center; color: #aaa; }
.ghost span { margin-top: 4px; }
.cur-arrow { position: absolute; left: 321px; top: 473px; width: 12px; height: 19px; }
.cur-plus { position: absolute; left: 331px; top: 493px; width: 11px; height: 11px; }
.callout { position: absolute; left: 0; top: 0; width: 1159px; height: 732px; fill: none; }
.badge { position: absolute; width: 40px; height: 40px; border-radius: 50%; background: #f8ab0a; color: #fff; font-size: 27px; line-height: 40px; text-align: center; z-index: 5; font-family: "Liberation Sans", Arial, sans-serif; }
.badge-1 { left: 813px; top: 629px; }
.badge-2 { left: 158px; top: 504px; }
.badge-3 { left: 377px; top: 419px; }
.badge-4 { left: 876px; top: 232px; }
.cur-hand { position: absolute; width: 18px; height: 24px; z-index: 6; }
.cur-hand-b { left: 479px; top: 520px; }
.cur-hand-d { left: 796px; top: 270px; }

/* modal */
.scrim { position: absolute; inset: 0; background: rgba(255,255,255,.5); }
.modal { position: absolute; left: 177px; top: 202px; width: 852px; height: 367px; background: #fff; border-radius: 3px; box-shadow: 0 5px 18px rgba(0,0,0,.18); color: #555; }
.modal-head { height: 48px; padding: 0 18px; background: #555; color: #fff; border-radius: 3px 3px 0 0; display: flex; align-items: center; justify-content: space-between; font-size: 18px; }
.modal-x { font-size: 25px; font-weight: bold; line-height: 25px; }
.modal-body { padding: 28px 28px 0; }
.filters { display: flex; gap: 8px; height: 24px; }
.pill { height: 24px; padding: 0 12px 0 16px; border-radius: 12px; background: #eee; font-size: 14px; line-height: 24px; white-space: pre; display: flex; align-items: center; }
.pill .caret { margin-left: 8px; }
.pager { display: flex; align-items: center; height: 32px; margin: 16px 0 8px; padding-left: 161.500px; font-size: 13.800px; }
.chev { width: 10px; height: 16px; fill: none; stroke: #ccc; stroke-width: 3; }
.chev-prev { margin: 0 14.500px 0 12px; }
.chev-next { margin: 0 11.500px 0 15px; }
.page-box { width: 40px; height: 32px; border: 2px solid #ddd; text-align: center; line-height: 28px; }
.page-total { margin-left: 15px; }
.pager-tools { margin-left: auto; display: flex; gap: 4px; align-items: center; }
.page-size { width: 65.500px; height: 32px; margin-right: 4px; border-radius: 16px; background: #eee; display: flex; align-items: center; gap: 7px; padding-left: 16px; }
.page-size .caret { border-width: 5px 4px 0; }
.round { width: 32px; height: 32px; border-radius: 50%; background: #eee; display: flex; align-items: center; justify-content: center; color: #444; }
.round svg { width: 14px; height: 14px; }
.grid-table { width: 796px; }
.gt-row { display: grid; grid-template-columns: 125px 91px 122px 117px 167px 174px; align-items: center; height: 45.300px; border-bottom: 1px solid #e3e3e3; font-size: 14px; }
.gt-row > span { padding-left: 16px; white-space: nowrap; }
.gt-row .na { color: #aaa; }
.gt-head { height: 47px; background: #555; color: #fff; font-size: 11.200px; font-weight: bold; text-transform: uppercase; border: 0; border-radius: 3px 3px 0 0; }
.gt-head .gt-sorted { color: #f5c044; display: flex; align-items: center; gap: 3px; }
.sort-up { width: 6px; height: 12px; }
.gt-hover { background: #f7f7f7; }
.grip { position: absolute; right: 1px; bottom: 1px; width: 10px; height: 10px; }

/* shop */
.shop { position: absolute; left: 0; top: 1608px; width: 1157px; height: 756px; display: flex; overflow: hidden; background: #fff; font-family: Lato, "Liberation Sans", sans-serif; color: #333; }
.shop-page { flex: none; width: 1142px; }
.topbar { height: 24px; background: #eee; display: flex; align-items: center; justify-content: space-between; padding: 0 9px 0 8px; font-size: 12px; color: #333; }
.top-left { display: flex; align-items: center; }
.top-left i { font-style: normal; margin: 0 7px; }
.signin { width: 11px; height: 11px; margin-right: 4px; }
.top-right { display: flex; gap: 40px; align-items: center; }
.promo { font-size: 13.800px; }
.top-right em { font-style: normal; color: #b5412a; }
.shop-wrap { padding: 0 9px 0 8px; }
.brand-row { height: 90px; display: flex; align-items: center; border-bottom: 1px solid #e6e6e6; }
.logo { flex: none; width: 403px; display: flex; align-items: center; font-family: "DejaVu Serif", serif; font-size: 26px; line-height: 36px; }
.logo-mark { width: 36px; height: 35px; margin-right: 6px; }
.logo-a { color: #fcb61d; padding-top: 1px; }
.logo-b { color: #c65f33; padding-top: 1px; }
.search { width: 320px; height: 50px; border: 1px solid #eee; border-radius: 4px; display: flex; align-items: center; justify-content: space-between; padding: 0 18px; font-size: 13px; color: #ccc; box-shadow: 0 1px 1px rgba(0,0,0,.04); }
.search svg { width: 15px; height: 18px; color: #ccc; }
.shop-nav { list-style: none; margin: 0; padding: 0 0 0 24px; height: 50px; display: flex; align-items: center; gap: 35.500px; font-size: 14px; border-bottom: 1px solid #e6e6e6; color: #333; }
.shop-nav li { display: flex; align-items: center; }
.vee { width: 8px; height: 5px; margin-left: 5px; fill: none; stroke: #333; stroke-width: 1.200; }
.nav-wide { margin-left: 13px; }
.shop-title { margin: 0; height: 62px; padding-top: 7px; font-size: 24px; font-weight: bold; line-height: 55px; color: #3a3a3a; border-bottom: 1px solid #e6e6e6; }
.shop-tabs { height: 56px; display: flex; align-items: flex-end; padding-left: 0; font-size: 14px; color: #2f86b5; border-bottom: 1px solid #ddd; }
.shop-tabs a { height: 34px; padding: 0 15px; line-height: 33px; }
.shop-tabs .is-on { height: 36px; margin-bottom: -1px; padding: 0 14px; background: #fff; border: 1px solid #ddd; border-bottom: 0; border-radius: 3px 3px 0 0; color: #333; line-height: 33px; }
.contact { display: grid; grid-template-columns: 522px 522px; column-gap: 17px; padding: 29px 32px 0; background: #f4f4f4; height: 474px; align-content: start; }
.cf-group label { display: block; height: 18px; margin-bottom: 9px; font-size: 14px; line-height: 15px; color: #333; }
.cf-group label sup { color: #b5412a; font-size: 13px; line-height: 0; }
.cf-group { height: 83px; }
.cf-full { grid-column: 1 / -1; }
.cf-input { position: relative; height: 38px; background: #fff; border: 1px solid #e8e8e8; border-radius: 3px; padding-left: 11px; font-size: 14px; line-height: 35px; color: #ccc; }
.cf-select { color: #333; display: flex; align-items: center; justify-content: space-between; padding-right: 8px; }
.cf-select .caret { border-width: 6px 4px 0; }
.cf-area { height: 80px; }
.shop-scroll { flex: none; width: 15px; background: #efefef; display: flex; flex-direction: column; align-items: center; }
.shop-thumb { width: 13px; height: 292px; margin: 3px 0 0 2px; background: #bbb; }
```
